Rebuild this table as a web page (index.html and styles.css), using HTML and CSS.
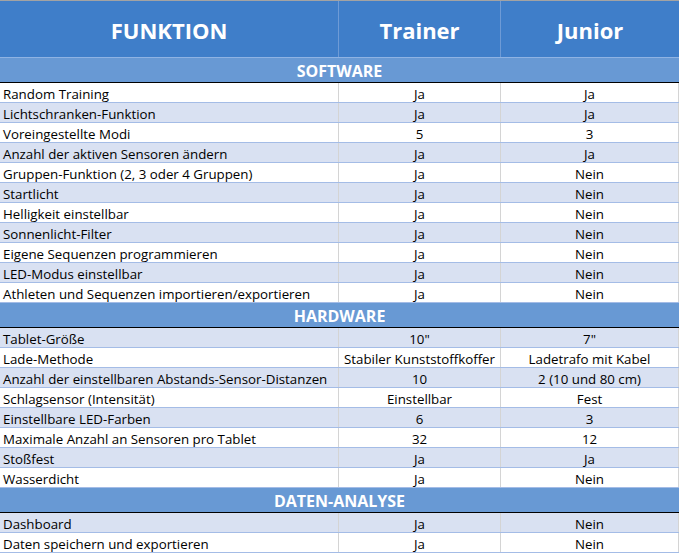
FILE: index.html
```html
<!DOCTYPE html>
<html lang="de">
<head>
<meta charset="utf-8">
<title>Funktionsvergleich</title>
<link rel="stylesheet" href="styles.css">
</head>
<body>
<div class="sheet">
  <div class="head">
    <div class="hc c1">FUNKTION</div>
    <div class="hc c2">Trainer</div>
    <div class="hc c3">Junior</div>
  </div>

  <div class="section">SOFTWARE</div>
  <div class="row"><div class="c c1">Random Training</div><div class="c c2">Ja</div><div class="c c3">Ja</div></div>
  <div class="row alt"><div class="c c1">Lichtschranken-Funktion</div><div class="c c2">Ja</div><div class="c c3">Ja</div></div>
  <div class="row"><div class="c c1">Voreingestellte Modi</div><div class="c c2">5</div><div class="c c3">3</div></div>
  <div class="row alt"><div class="c c1">Anzahl der aktiven Sensoren ändern</div><div class="c c2">Ja</div><div class="c c3">Ja</div></div>
  <div class="row"><div class="c c1">Gruppen-Funktion (2, 3 oder 4 Gruppen)</div><div class="c c2">Ja</div><div class="c c3">Nein</div></div>
  <div class="row alt"><div class="c c1">Startlicht</div><div class="c c2">Ja</div><div class="c c3">Nein</div></div>
  <div class="row"><div class="c c1">Helligkeit einstellbar</div><div class="c c2">Ja</div><div class="c c3">Nein</div></div>
  <div class="row alt"><div class="c c1">Sonnenlicht-Filter</div><div class="c c2">Ja</div><div class="c c3">Nein</div></div>
  <div class="row"><div class="c c1">Eigene Sequenzen programmieren</div><div class="c c2">Ja</div><div class="c c3">Nein</div></div>
  <div class="row alt"><div class="c c1">LED-Modus einstellbar</div><div class="c c2">Ja</div><div class="c c3">Nein</div></div>
  <div class="row"><div class="c c1">Athleten und Sequenzen importieren/exportieren</div><div class="c c2">Ja</div><div class="c c3">Nein</div></div>

  <div class="section">HARDWARE</div>
  <div class="row alt"><div class="c c1">Tablet-Größe</div><div class="c c2">10"</div><div class="c c3">7"</div></div>
  <div class="row"><div class="c c1">Lade-Methode</div><div class="c c2">Stabiler Kunststoffkoffer</div><div class="c c3">Ladetrafo mit Kabel</div></div>
  <div class="row alt"><div class="c c1">Anzahl der einstellbaren Abstands-Sensor-Distanzen</div><div class="c c2">10</div><div class="c c3">2 (10 und 80 cm)</div></div>
  <div class="row"><div class="c c1">Schlagsensor (Intensität)</div><div class="c c2">Einstellbar</div><div class="c c3">Fest</div></div>
  <div class="row alt"><div class="c c1">Einstellbare LED-Farben</div><div class="c c2">6</div><div class="c c3">3</div></div>
  <div class="row"><div class="c c1">Maximale Anzahl an Sensoren pro Tablet</div><div class="c c2">32</div><div class="c c3">12</div></div>
  <div class="row alt"><div class="c c1">Stoßfest</div><div class="c c2">Ja</div><div class="c c3">Ja</div></div>
  <div class="row"><div class="c c1">Wasserdicht</div><div class="c c2">Ja</div><div class="c c3">Nein</div></div>

  <div class="section">DATEN-ANALYSE</div>
  <div class="row alt"><div class="c c1">Dashboard</div><div class="c c2">Ja</div><div class="c c3">Nein</div></div>
  <div class="row"><div class="c c1">Daten speichern und exportieren</div><div class="c c2">Ja</div><div class="c c3">Nein</div></div>
</div>
</body>
</html>
```

FILE: styles.css
```css
html, body {
  margin: 0;
  padding: 0;
  background: #ffffff;
}

.sheet {
  width: 679px;
  font-family: "Open Sans", "Liberation Sans", sans-serif;
  color: #000000;
}

.head {
  display: grid;
  grid-template-columns: 339px 162px 178px;
  height: 58px;
  box-sizing: border-box;
  border-top: 1px solid #a3a3a3;
  border-bottom: 1px solid #8fb3e3;
  background: #3f7ec9;
}

.hc {
  display: flex;
  align-items: center;
  justify-content: center;
  color: #ffffff;
  font-weight: 700;
  font-size: 22px;
  box-sizing: border-box;
  padding-top: 1px;
}

.head .c1,
.head .c2 {
  border-right: 1px solid #6e9bd6;
}

.section {
  height: 25px;
  box-sizing: border-box;
  border-bottom: 1px solid #000000;
  background: #6899d4;
  color: #ffffff;
  font-weight: 700;
  font-size: 16px;
  display: flex;
  align-items: center;
  justify-content: center;
  padding-top: 2px;
}

.row {
  display: grid;
  grid-template-columns: 339px 162px 178px;
  height: 20px;
  box-sizing: border-box;
  border-bottom: 1px solid #a4bce6;
  background: #ffffff;
  font-size: 13.3px;
}

.row.alt {
  background: #d9e1f2;
}

.c {
  display: flex;
  align-items: center;
  white-space: nowrap;
  overflow: hidden;
  box-sizing: border-box;
  padding-top: 2px;
}

.c.c1 {
  padding-left: 3px;
  border-right: 1px solid #d4d4d4;
}

.c.c2 {
  justify-content: center;
  border-right: 1px solid #d4d4d4;
}

.c.c3 {
  justify-content: center;
  border-right: 1px solid #d4d4d4;
}
```
